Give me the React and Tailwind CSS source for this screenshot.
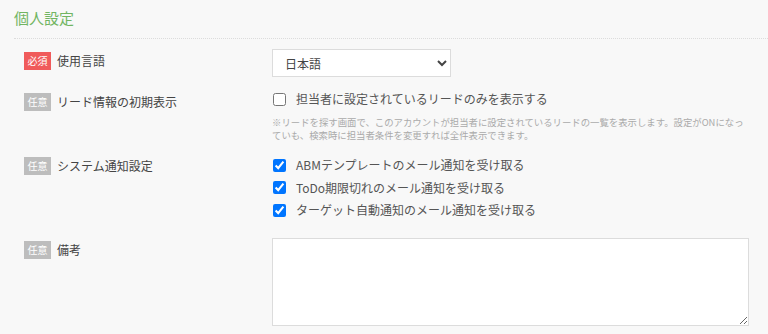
import { useState } from 'react'

const FONT = { fontFamily: '"Noto Sans CJK JP", "Noto Sans", sans-serif' }

function Badge({ required }) {
  return (
    <span
      className={`inline-flex h-[18px] w-[27px] shrink-0 items-center justify-center text-[10px] leading-none text-white ${
        required ? 'bg-[#f05b5b]' : 'bg-[#bdbdbd]'
      }`}
    >
      {required ? '必須' : '任意'}
    </span>
  )
}

function Label({ required, children, pt }) {
  return (
    <div className={`flex w-[248px] shrink-0 items-center gap-[6px] ${pt}`}>
      <Badge required={required} />
      <span className="text-[12px] leading-[18px] text-[#444]">{children}</span>
    </div>
  )
}

function Check({ checked, children }) {
  const [on, setOn] = useState(checked)
  return (
    <label className="flex h-[22.5px] items-center gap-[10px] text-[12px] text-[#555]">
      <input
        type="checkbox"
        checked={on}
        onChange={() => setOn(!on)}
        className="m-0 ml-px h-[13px] w-[13px]"
      />
      <span>{children}</span>
    </label>
  )
}

export default function App() {
  return (
    <div className="min-h-[334px] bg-[#f8f8f8] pt-[6px]" style={FONT}>
      <h2 className="mx-[14px] h-6 text-[15px] leading-6 text-[#71b562]">個人設定</h2>
      <div className="mt-2 ml-[14px] border-t border-dotted border-[#dcdcdc]" />

      <div className="pl-6 pr-[19px] pt-[10px]">
        {/* 使用言語 */}
        <div className="flex items-start">
          <Label required pt="pt-[3px]">使用言語</Label>
          <select className="h-7 w-[179px] border border-[#dcdcdc] bg-white pl-2 text-[12px] text-[#444]">
            <option>日本語</option>
            <option>English</option>
          </select>
        </div>

        {/* リード情報 */}
        <div className="mt-3 flex items-start">
          <Label pt="pt-[4px]">リード情報の初期表示</Label>
          <div>
            <div className="flex h-5 items-center gap-[10px] text-[12px] text-[#555]">
              <input type="checkbox" className="m-0 ml-px h-[13px] w-[13px]" />
              <span>担当者に設定されているリードのみを表示する</span>
            </div>
            <p className="mt-[7px] whitespace-nowrap text-[9.4px] leading-[13px] text-[#aaa]">
              ※リードを探す画面で、このアカウントが担当者に設定されているリードの一覧を表示します。設定がONになっ
              <br />
              ていも、検索時に担当者条件を変更すれば全件表示できます。
            </p>
          </div>
        </div>

        {/* システム通知設定 */}
        <div className="mt-[12px] flex items-start">
          <Label pt="pt-[3px]">システム通知設定</Label>
          <div className="flex flex-col">
            <Check checked>ABMテンプレートのメール通知を受け取る</Check>
            <Check checked>ToDo期限切れのメール通知を受け取る</Check>
            <Check checked>ターゲット自動通知のメール通知を受け取る</Check>
          </div>
        </div>

        {/* 備考 */}
        <div className="mt-[16px] flex items-start">
          <Label pt="pt-[3px]">備考</Label>
          <textarea className="h-[88px] flex-1 border border-[#dcdcdc] bg-white p-2 text-[12px]" />
        </div>
      </div>
    </div>
  )
}
